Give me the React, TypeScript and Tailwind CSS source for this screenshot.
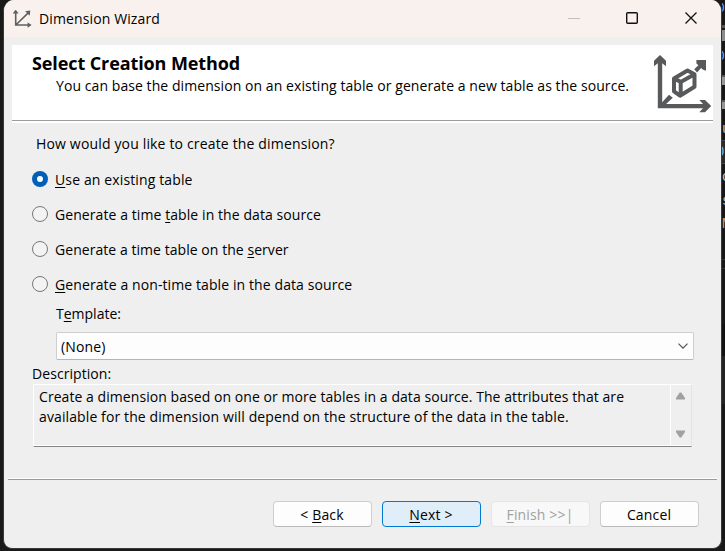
import type { ReactNode } from "react";

const GLYPH = "shrink-0 overflow-hidden text-[14px] leading-[14px] text-[#b9c7d6]";

function EditorEdge() {
  return (
    <div className="flex w-[3px] shrink-0 flex-col overflow-hidden bg-[#181818] font-['Liberation_Mono',monospace]">
      <div className="h-[17px] shrink-0 overflow-hidden pt-[2px] text-[13px] leading-[13px] text-[#7db4e0]"><span className="-ml-[5px]">0,</span></div>
      <div className="mt-[8px] h-[3px] shrink-0 bg-[#555]" />
      <div className="mt-[2px] h-[11px] shrink-0 bg-[#8b8b8b]" />
      <div className="mt-[9px] h-[14px] shrink-0 overflow-hidden text-[13px] leading-[13px] text-[#7db4e0]"><span className="-ml-[5px]">0,</span></div>
      <div className="mt-[11px] h-[10px] shrink-0 border-t-2 border-[#555] bg-[#969696]" />
      <div className="mt-[15px] h-[9px] shrink-0 border-t-2 border-[#555] bg-[#969696]" />
      <div className={`mt-[13px] h-[14px] ${GLYPH}`}>u</div>
      <div className="mt-[4px] h-[24px] shrink-0 overflow-hidden border-y border-[#484848] bg-[#2b2b2b] pt-[4px] text-[14px] leading-[14px] text-[#7db4e0]"><span className="-ml-[6px]">0</span></div>
      <div className={`mt-[6px] h-[14px] ${GLYPH}`}>c</div>
      <div className={`mt-[10px] h-[14px] ${GLYPH}`}>s</div>
      <div className="mt-[9px] h-[14px] shrink-0 overflow-hidden text-[14px] leading-[14px] text-[#d9a15f]">M</div>
      <div className="mt-[28px] h-[10px] shrink-0 border-y border-[#353535]" />
      <div className="mt-[55px] h-[32px] shrink-0 bg-[#121212]" />
      <div className="h-[48px] shrink-0 bg-[#242424]" />
    </div>
  );
}

function SmallAxes() {
  return (
    <svg className="mt-px h-[18px] w-[19px] shrink-0" viewBox="0 0 19 18" fill="#5d6062" stroke="#5d6062">
      <path d="M2.7 1.5v13.5H17M3 14.8L15.5 2.6" fill="none" strokeWidth="1.6" />
      <path d="M1.4 2.6L2.7 1l1.3 1.6zM15.4 13.8l1.8 1.2-1.8 1.2zM13.8 1.7l2.6-.3-.3 2.6z" strokeWidth="1.6" />
    </svg>
  );
}

function DimensionIcon() {
  return (
    <svg className="h-[58px] w-[58px] shrink-0" viewBox="0 0 58 58" fill="#58595b">
      <path d="M3.8 53.3V8.2L0 11.3V5.8L6 0l6 5.8v5.5L8.2 8.2V49h40.8l-3.7-4h5.7l6.2 6-6.2 6.2h-5.7l3.7-3.9z" />
      <path d="M7 48.6L15 39.8l3.8 3L10.5 50.5zM40.2 14.3l4.2-4-2-1.7V5H52v10.7l-3.3-1.2-1.6-1.6-4 4.6z" />
      <path d="M20 23.5l13.5-8 7 3.7v12.6L26 40.7l-6-4.4zM20 23.5l6.7 3.4 13.8-7.7M26.7 27v13" fill="none" stroke="#58595b" strokeWidth="4" strokeLinejoin="round" />
    </svg>
  );
}

function Radio({ label, className, checked = false }: { label: ReactNode; className: string; checked?: boolean }) {
  return (
    <label className="flex h-[35px] items-center">
      <span
        className={
          checked
            ? "flex size-4 shrink-0 items-center justify-center rounded-full bg-[#005fb8]"
            : "size-4 shrink-0 rounded-full border border-[#777] bg-[#f3f3f3]"
        }
      >
        {checked && <span className="size-[6px] rounded-full bg-white" />}
      </span>
      <span className={`ml-[7px] pt-[2px] whitespace-nowrap ${className}`}>{label}</span>
    </label>
  );
}

function Key({ children }: { children: string }) {
  return <span className="underline decoration-1 underline-offset-2">{children}</span>;
}

const BUTTON = "flex h-[26px] w-[99px] items-center justify-center rounded-[4px] border pt-px pr-px tracking-[0.15px] whitespace-nowrap";

export default function App() {
  return (
    <div className="flex h-[551px] w-[725px] overflow-hidden bg-[#1a1919] font-['Open_Sans','Noto_Sans',sans-serif] text-[14px] leading-5 text-black">
      <div className="w-[3px] shrink-0" />
      <div className="flex h-[549px] w-[719px] shrink-0 flex-col overflow-hidden rounded-[9px] rounded-t-[11px] border border-t-0 border-[#383838] bg-[#efefef]">
        <header className="flex h-[37px] shrink-0 items-center bg-[#f9f1ee] pl-[9px]">
          <SmallAxes />
          <span className="ml-[7px] tracking-[0.12px] whitespace-nowrap">Dimension Wizard</span>
          <svg className="ml-auto h-5 w-[131px] shrink-0" viewBox="0 0 131 20" fill="none" stroke="#111">
            <path d="M0 9.5h12" stroke="#c4bdbb" />
            <rect x="58.7" y="3.7" width="10.6" height="10.6" rx="1" strokeWidth="1.4" />
            <path d="M117.5 3.5l11 11M128.5 3.5l-11 11" strokeWidth="1.3" />
          </svg>
          <div className="w-[22px]" />
        </header>

        <section className="mx-2 mt-2 flex h-[78px] shrink-0 flex-col bg-white">
          <div className="flex h-[75px] justify-between">
            <div className="pt-[7px] pl-5">
              <h1 className="text-[18px] leading-[22px] font-bold tracking-[-0.1px] whitespace-nowrap">Select Creation Method</h1>
              <p className="pt-px pl-6 leading-[22px] tracking-[0.07px] whitespace-nowrap">You can base the dimension on an existing table or generate a new table as the source.</p>
            </div>
            <div className="pt-[10px] pr-[1px]"><DimensionIcon /></div>
          </div>
          <div className="h-px bg-[#9c9c9c]" />
        </section>

        <main className="shrink-0 pt-[11px] pl-7">
          <p className="h-5 pl-1 tracking-[0.16px] whitespace-nowrap">How would you like to create the dimension?</p>
          <div className="mt-[7px]">
            <Radio checked className="tracking-[0.13px]" label={<><Key>U</Key>se an existing table</>} />
            <Radio className="tracking-[0.08px]" label={<>Generate a time <Key>t</Key>able in the data source</>} />
            <Radio className="tracking-[0.05px]" label={<>Generate a time table on the <Key>s</Key>erver</>} />
            <Radio className="tracking-[0.1px]" label={<><Key>G</Key>enerate a non-time table in the data source</>} />
          </div>
          <p className="mt-[3px] h-5 pl-6 whitespace-nowrap">T<Key>e</Key>mplate:</p>
          <div className="mt-2 ml-6 flex h-[28px] w-[638px] items-center justify-between rounded-[2px] border border-[#cfcfcf] border-b-[#b5b5b5] bg-[#fdfdfd] pr-[5px] pl-[4px]">
            <span className="pt-px tracking-[0.15px]">(None)</span>
            <svg className="h-[6px] w-[10px]" viewBox="0 0 10 6" fill="none" stroke="#555" strokeWidth="1.2"><path d="M.5.7L5 5.2 9.5.7" /></svg>
          </div>
          <p className="mt-1 h-5 tracking-[0.07px] whitespace-nowrap">Description:</p>
          <div className="ml-px flex h-[63px] w-[659px] border-t border-r border-b border-l border-t-white border-r-[#e4e4e4] border-b-[#838383] border-l-white">
            <div className="w-[637px] shrink-0 border-r border-b border-white pt-[2px] pl-[5px] whitespace-nowrap">
              <p className="tracking-[0.06px]">Create a dimension based on one or more tables in a data source. The attributes that are</p>
              <p className="tracking-[0.11px]">available for the dimension will depend on the structure of the data in the table.</p>
            </div>
            <div className="flex flex-1 flex-col items-center justify-between border-b border-white pt-[7px] pr-[2px] pb-[7px]">
              <svg className="h-[8px] w-[9px]" viewBox="0 0 9 8" fill="#a0a0a0"><path d="M3.7.5h1.6L9 6v1.5H0V6z" /></svg>
              <svg className="h-[8px] w-[9px]" viewBox="0 0 9 8" fill="#a0a0a0"><path d="M3.7 7.5h1.6L9 2V.5H0V2z" /></svg>
            </div>
          </div>
        </main>

        <footer className="mx-1 mt-[31px] shrink-0 border-t border-white">
          <div className="h-px bg-[#989898]" />
          <div className="mt-[21px] flex justify-end gap-[10px] pr-[18px]">
            <div className={`${BUTTON} border-[#cecece] border-b-[#b8b8b8] bg-[#fdfdfd]`}><span>&lt; <Key>B</Key>ack</span></div>
            <div className={`${BUTTON} border-[#0078d4] bg-[#e0eef9]`}><span><Key>N</Key>ext &gt;</span></div>
            <div className={`${BUTTON} border-[#e5e5e5] bg-[#f8f8f8] text-[#a0a0a0]`}><span><Key>F</Key>inish &gt;&gt;|</span></div>
            <div className={`${BUTTON} border-[#cecece] border-b-[#b8b8b8] bg-[#fdfdfd]`}><span>Cancel</span></div>
          </div>
        </footer>
      </div>
      <EditorEdge />
    </div>
  );
}
